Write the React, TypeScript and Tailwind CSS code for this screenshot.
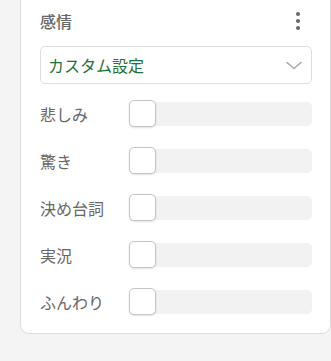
const rows = ["悲しみ", "驚き", "決め台詞", "実況", "ふんわり"];

function Slider() {
  return (
    <div className="relative flex-1 h-[27px] flex items-center">
      <div className="w-full h-[24px] rounded-[5px] bg-[#f2f2f2]" />
      <div className="absolute left-0 top-0 w-[27px] h-[27px] rounded-[5px] bg-white border border-[#c4c4c4] shadow-[0_1px_2px_rgba(0,0,0,0.12)]" />
    </div>
  );
}

export default function App() {
  return (
    <div
      className="w-[331px] h-[361px] bg-[#f4f4f4] pl-[20px] overflow-hidden"
      style={{ fontFamily: '"Noto Sans CJK JP", "Noto Sans", sans-serif' }}
    >
      <div className="w-[311px] h-[344px] -mt-[10px] bg-white border border-[#dcdcdc] rounded-b-[9px] pt-[18px] pl-[19px] pr-[18px]">
        <div className="flex items-center justify-between h-[24px]">
          <span className="text-[16px] font-medium text-[#666] leading-none">感情</span>
          <div className="flex flex-col gap-[3.5px] w-[4px] items-center mr-[12px]">
            <span className="w-[3.5px] h-[3.5px] rounded-full bg-[#666]" />
            <span className="w-[3.5px] h-[3.5px] rounded-full bg-[#666]" />
            <span className="w-[3.5px] h-[3.5px] rounded-full bg-[#666]" />
          </div>
        </div>
        <div className="mt-[13px] h-[38px] rounded-[5px] border border-[#dedede] flex items-center justify-between pl-[7px] pr-[9px]">
          <span className="text-[16px] text-[#1f6f3b] leading-none">カスタム設定</span>
          <svg width="16" height="9" viewBox="0 0 16 9" fill="none">
            <path d="M1 1.5L8 7.5L15 1.5" stroke="#a8a8a8" strokeWidth="1.6" strokeLinecap="round" strokeLinejoin="round" />
          </svg>
        </div>
        <div className="mt-[16px] flex flex-col gap-[20px]">
          {rows.map((r) => (
            <div key={r} className="flex items-center">
              <span className="w-[89px] text-[16px] text-[#666] leading-none">{r}</span>
              <Slider />
            </div>
          ))}
        </div>
      </div>
    </div>
  );
}
